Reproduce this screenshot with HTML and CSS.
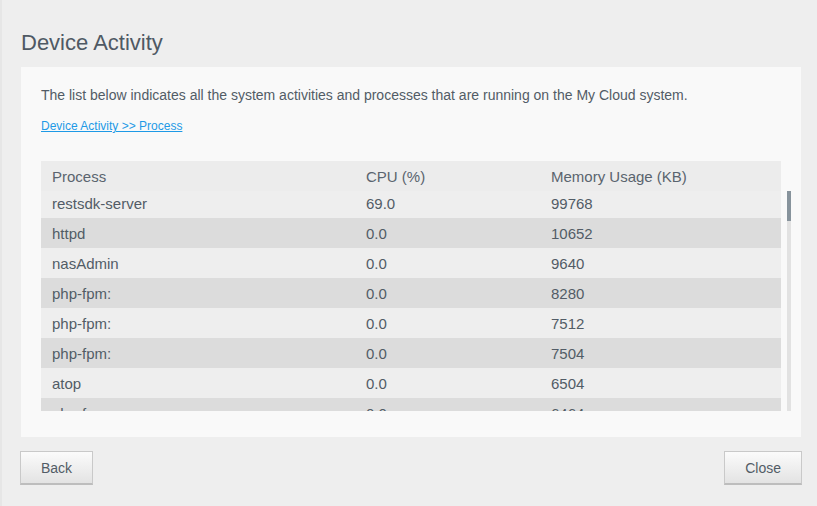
FILE: index.html
```html
<!DOCTYPE html>
<html>
<head>
<meta charset="utf-8">
<link rel="stylesheet" href="styles.css">
</head>
<body>
<div class="dialog">
  <h1 class="title">Device Activity</h1>
  <div class="panel">
    <p class="desc">The list below indicates all the system activities and processes that are running on the My Cloud system.</p>
    <div class="crumb"><a href="#">Device Activity &gt;&gt; Process</a></div>
    <div class="table">
      <div class="row head">
        <div class="c1">Process</div>
        <div class="c2">CPU (%)</div>
        <div class="c3">Memory Usage (KB)</div>
      </div>
      <div class="scroll-area">
        <div class="rows">
          <div class="rows-inner">
            <div class="row light"><div class="c1">restsdk-server</div><div class="c2">69.0</div><div class="c3">99768</div></div>
            <div class="row dark"><div class="c1">httpd</div><div class="c2">0.0</div><div class="c3">10652</div></div>
            <div class="row light"><div class="c1">nasAdmin</div><div class="c2">0.0</div><div class="c3">9640</div></div>
            <div class="row dark"><div class="c1">php-fpm:</div><div class="c2">0.0</div><div class="c3">8280</div></div>
            <div class="row light"><div class="c1">php-fpm:</div><div class="c2">0.0</div><div class="c3">7512</div></div>
            <div class="row dark"><div class="c1">php-fpm:</div><div class="c2">0.0</div><div class="c3">7504</div></div>
            <div class="row light"><div class="c1">atop</div><div class="c2">0.0</div><div class="c3">6504</div></div>
            <div class="row dark"><div class="c1">php-fpm:</div><div class="c2">0.0</div><div class="c3">6464</div></div>
          </div>
        </div>
        <div class="scrollbar"><div class="thumb"></div></div>
      </div>
    </div>
  </div>
  <div class="footer">
    <button class="btn">Back</button>
    <button class="btn">Close</button>
  </div>
</div>
</body>
</html>
```
FILE: styles.css
```css
html, body {
  margin: 0;
  padding: 0;
  background: #eeeeee;
  font-family: "Liberation Sans", Arial, sans-serif;
  color: #525c66;
}
.dialog {
  width: 817px;
  height: 506px;
  box-sizing: border-box;
  padding: 0 16px 0 19px;
  border-left: 2px solid #e6e6e6;
}
.title {
  margin: 0;
  padding-top: 30px;
  margin-bottom: 11px;
  font-size: 22px;
  line-height: 26px;
  font-weight: normal;
  color: #4f5964;
}
.panel {
  background: #f9f9f9;
  height: 370px;
  box-sizing: border-box;
  padding: 20px 10px 0 20px;
}
.desc {
  margin: 0 0 15px 0;
  font-size: 14px;
  line-height: 17px;
}
.crumb {
  font-size: 12px;
  line-height: 14px;
}
.crumb a {
  color: #1e9ae6;
  text-decoration: underline;
}
.table {
  margin-top: 28px;
  font-size: 15px;
}
.row {
  display: flex;
  align-items: center;
  height: 30px;
  width: 740px;
}
.head {
  background: #ececec;
  color: #5a646e;
}
.c1 { width: 314px; padding-left: 11px; }
.c2 { width: 185px; }
.c3 { flex: 1; }
.scroll-area {
  display: flex;
  gap: 6px;
}
.rows {
  width: 740px;
  height: 220px;
  overflow: hidden;
}
.rows-inner {
  margin-top: -3px;
}
.light { background: #eeeeee; }
.dark { background: #dcdcdc; }
.scrollbar {
  width: 4px;
  height: 220px;
  background: #e2e2e2;
}
.thumb {
  height: 30px;
  background: #87939c;
}
.footer {
  display: flex;
  justify-content: space-between;
  margin: 14px -1px 0 -1px;
}
.btn {
  height: 34px;
  box-sizing: border-box;
  padding: 0 20px;
  font-family: "Liberation Sans", Arial, sans-serif;
  font-size: 14px;
  color: #525c66;
  background: linear-gradient(#fbfbfb, #e3e3e3);
  border: 1px solid #c9c9c9;
  border-bottom: 2px solid #bdbdbd;
  border-radius: 0;
}
```
